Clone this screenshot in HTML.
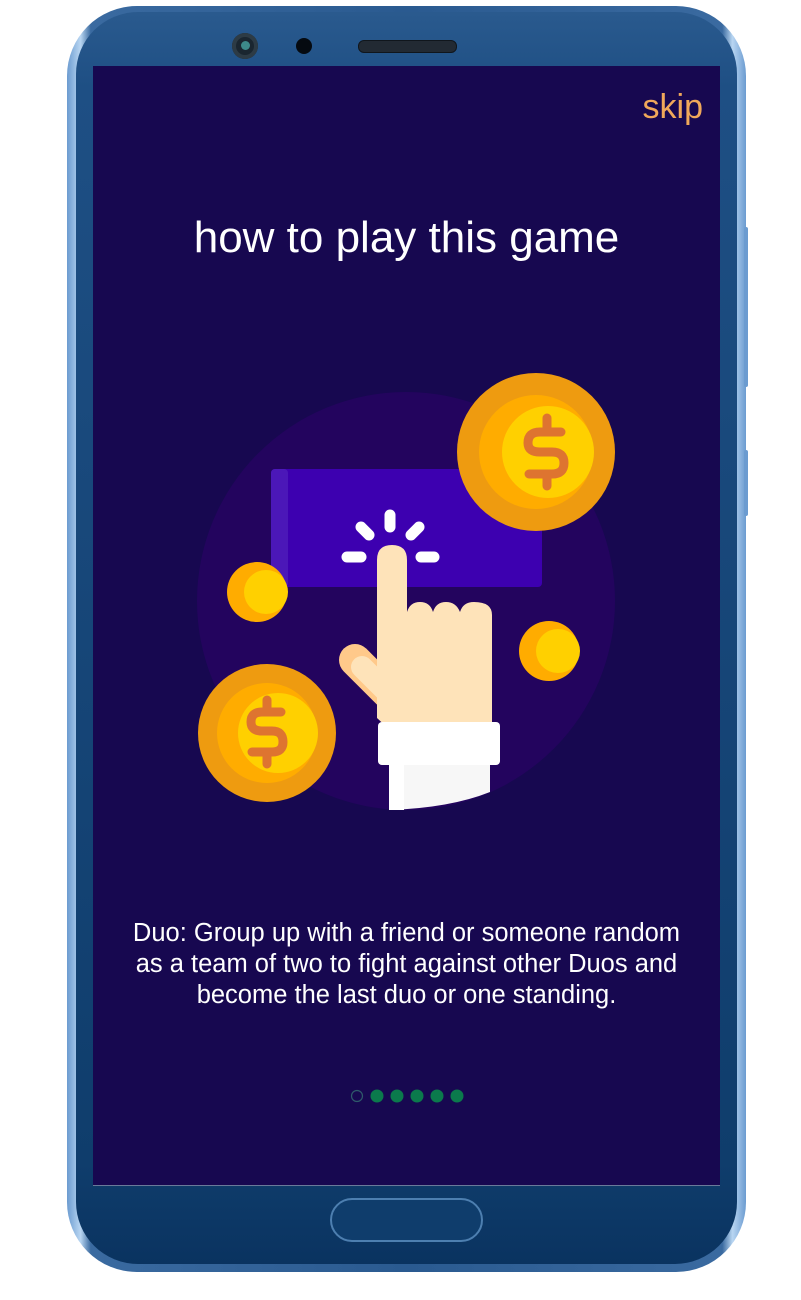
<!DOCTYPE html>
<html><head><meta charset="utf-8"><style>
html,body{margin:0;padding:0;background:#fff;width:801px;height:1300px;overflow:hidden;font-family:"Liberation Sans",Roboto,sans-serif}
.abs{position:absolute}
</style></head><body>
<div class="abs" style="left:67px;top:6px;width:679px;height:1266px;border-radius:70px;background:linear-gradient(90deg,#6b9bd0,#b9d6f2 2%,#3a6aa0 3.5%,#2a5a90 50%,#3a6aa0 96.5%,#b9d6f2 98%,#6b9bd0);"></div>
<div class="abs" style="left:76px;top:12px;width:661px;height:1252px;border-radius:62px;background:linear-gradient(180deg,#2a5a8e 0%,#1e4f84 6%,#0f3d6c 92%,#0a3360 100%);"></div>
<div class="abs" style="left:744px;top:227px;width:4px;height:160px;background:#6b9bd0;border-radius:2px"></div>
<div class="abs" style="left:744px;top:450px;width:4px;height:66px;background:#6b9bd0;border-radius:2px"></div>
<div class="abs" style="left:232px;top:33px;width:26px;height:26px;border-radius:50%;background:#1a2630;box-shadow:inset 0 0 0 4px #2d3b45"></div>
<div class="abs" style="left:241px;top:41px;width:9px;height:9px;border-radius:50%;background:#3d8a8a"></div>
<div class="abs" style="left:296px;top:38px;width:16px;height:16px;border-radius:50%;background:#050a10"></div>
<div class="abs" style="left:358px;top:40px;width:97px;height:11px;border-radius:6px;background:#222a33;border:1px solid #10161c"></div>
<div class="abs" style="left:93px;top:66px;width:627px;height:1119px;background:#170850;"></div>
<div class="abs" style="left:93px;top:1185px;width:627px;height:1px;background:#6a7a9a"></div>
<div class="abs" style="left:330px;top:1198px;width:153px;height:44px;border-radius:22px;border:2px solid #4d7fb0;background:#0f3d6c;box-sizing:border-box"></div>

<div class="abs" style="left:600px;top:88px;width:103px;text-align:right;color:#f0a85a;font-size:34px">skip</div>
<div class="abs" style="left:93px;top:213px;width:627px;text-align:center;color:#fff;font-size:44px">how to play this game</div>

<svg class="abs" style="left:0;top:0" width="801" height="1300">
<circle cx="406" cy="601" r="209" fill="#23045e"/>
<rect x="271" y="469" width="271" height="118" rx="4" fill="#3d00b0"/>
<rect x="271" y="469" width="17" height="118" rx="4" fill="#4b17b8"/>
<circle cx="257" cy="592" r="30" fill="#ffac00"/><circle cx="266" cy="592" r="22" fill="#ffd000"/>
<circle cx="549" cy="651" r="30" fill="#ffac00"/><circle cx="558" cy="651" r="22" fill="#ffd000"/>
<circle cx="536" cy="452" r="79" fill="#ee9b10"/>
<circle cx="536" cy="452" r="57" fill="#ffac00"/>
<circle cx="548" cy="452" r="46" fill="#ffd000"/>
<path d="M547,418 V428 M547,476 V486 M561,432 H540 Q528,432 528,443 Q528,452 540,452 H552 Q564,452 564,463 Q564,474 552,474 H529" stroke="#de7430" stroke-width="9" fill="none" stroke-linecap="round" stroke-linejoin="round"/>
<circle cx="267" cy="733" r="69" fill="#ee9b10"/>
<circle cx="267" cy="733" r="50" fill="#ffac00"/>
<circle cx="278" cy="733" r="40" fill="#ffd000"/>
<path d="M267,700 V709 M267,755 V764 M281,712 H262 Q251,712 251,722 Q251,731 262,731 H272 Q283,731 283,742 Q283,752 272,752 H252" stroke="#de7430" stroke-width="9" fill="none" stroke-linecap="round" stroke-linejoin="round"/>
<g stroke="#fff" stroke-width="11" stroke-linecap="round">
<line x1="390" y1="515" x2="390" y2="527"/>
<line x1="361" y1="527" x2="369" y2="535"/>
<line x1="419" y1="527" x2="411" y2="535"/>
<line x1="347" y1="557" x2="361" y2="557"/>
<line x1="421" y1="557" x2="434" y2="557"/>
</g>
<line x1="355" y1="660" x2="420" y2="725" stroke="#ffc98a" stroke-width="32" stroke-linecap="round"/>
<line x1="362" y1="667" x2="425" y2="730" stroke="#fee3b9" stroke-width="22" stroke-linecap="round"/>
<path d="M377,560 Q377,545 392,545 Q407,545 407,560 V612 Q410,602 420,602 Q430,602 433,612 Q436,602 446,602 Q456,602 460,612 Q463,602 474,602 Q492,602 492,615 V730 H390 L377,718 Z" fill="#fee3b9"/>
<rect x="378" y="722" width="122" height="43" rx="4" fill="#fff"/>
<path d="M389,765 H490 V792 Q450,808 389,810 Z" fill="#f7f7f7"/>
<path d="M389,765 H404 V810 H389 Z" fill="#fff"/>
<circle cx="357" cy="1096" r="5.5" fill="none" stroke="#2e5a6a" stroke-width="1.2"/>
<circle cx="377" cy="1096" r="6.5" fill="#0b7a4c"/>
<circle cx="397" cy="1096" r="6.5" fill="#0b7a4c"/>
<circle cx="417" cy="1096" r="6.5" fill="#0b7a4c"/>
<circle cx="437" cy="1096" r="6.5" fill="#0b7a4c"/>
<circle cx="457" cy="1096" r="6.5" fill="#0b7a4c"/>
</svg>

<div class="abs" style="left:93px;top:918px;width:627px;text-align:center;color:#fff;font-size:25.5px;line-height:31px;white-space:nowrap">Duo: Group up with a friend or someone random<br>as a team of two to fight against other Duos and<br>become the last duo or one standing.</div>
</body></html>
